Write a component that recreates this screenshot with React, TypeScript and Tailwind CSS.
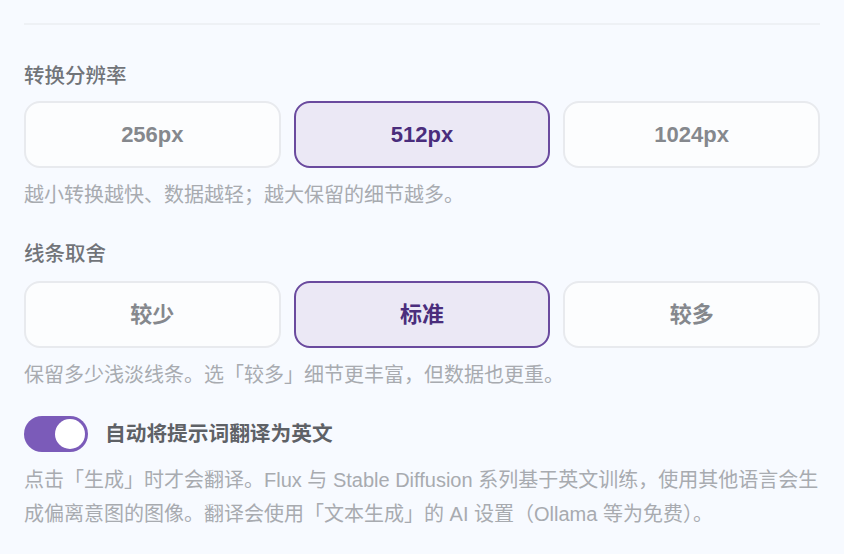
import React, { useState } from "react";

const font = { fontFamily: '"Liberation Sans", "Noto Sans CJK SC", sans-serif' };

function Seg({ options, value, onChange }: { options: string[]; value: string; onChange: (v: string) => void }) {
  return (
    <div className="grid grid-cols-3 gap-[13px]">
      {options.map((o) => {
        const sel = o === value;
        return (
          <button
            key={o}
            onClick={() => onChange(o)}
            className={
              sel
                ? "h-[67px] rounded-[16px] border-2 border-[#6a4a9e] bg-[#ebe8f5] text-[22px] font-bold text-[#4a2d7c]"
                : "h-[67px] rounded-[16px] border-2 border-[#e8eaee] bg-[#fcfdfe] text-[22px] font-bold text-[#85888d]"
            }
          >
            {o}
          </button>
        );
      })}
    </div>
  );
}

export default function App() {
  const [res, setRes] = useState("512px");
  const [lines, setLines] = useState("标准");
  const [on, setOn] = useState(true);
  return (
    <div className="min-h-[554px] w-[844px] bg-[#f7faff] px-[24px] pt-[23px]" style={font}>
      <div className="h-[2px] bg-[#eef1f5]" />
      <div className="mt-[38px] text-[20.5px] font-medium leading-[26px] text-[#717479]">转换分辨率</div>
      <div className="mt-[12px]">
        <Seg options={["256px", "512px", "1024px"]} value={res} onChange={setRes} />
      </div>
      <div className="mt-[14px] text-[20px] leading-[26px] text-[#a8abb0]">越小转换越快、数据越轻；越大保留的细节越多。</div>
      <div className="mt-[33px] text-[20.5px] font-medium leading-[26px] text-[#717479]">线条取舍</div>
      <div className="mt-[14px]">
        <Seg options={["较少", "标准", "较多"]} value={lines} onChange={setLines} />
      </div>
      <div className="mt-[14px] text-[20px] leading-[26px] text-[#a8abb0]">保留多少浅淡线条。选「较多」细节更丰富，但数据也更重。</div>
      <div className="mt-[28px] flex items-center gap-[17px]">
        <button
          onClick={() => setOn(!on)}
          className={
            on
              ? "flex h-[36px] w-[64px] shrink-0 items-center justify-end rounded-full bg-[#7b5bb9] px-[3px]"
              : "flex h-[36px] w-[64px] shrink-0 items-center justify-start rounded-full bg-[#d4d6db] px-[3px]"
          }
        >
          <span className="block h-[30px] w-[30px] rounded-full bg-white" />
        </button>
        <span className="text-[20.7px] font-bold text-[#5e6166]">自动将提示词翻译为英文</span>
      </div>
      <div className="mt-[11px] text-[20px] leading-[34px] text-[#a8abb0]">
        点击「生成」时才会翻译。Flux 与 Stable Diffusion 系列基于英文训练，使用其他语言会生成偏离意图的图像。翻译会使用「文本生成」的 AI 设置（Ollama 等为免费）。
      </div>
    </div>
  );
}
